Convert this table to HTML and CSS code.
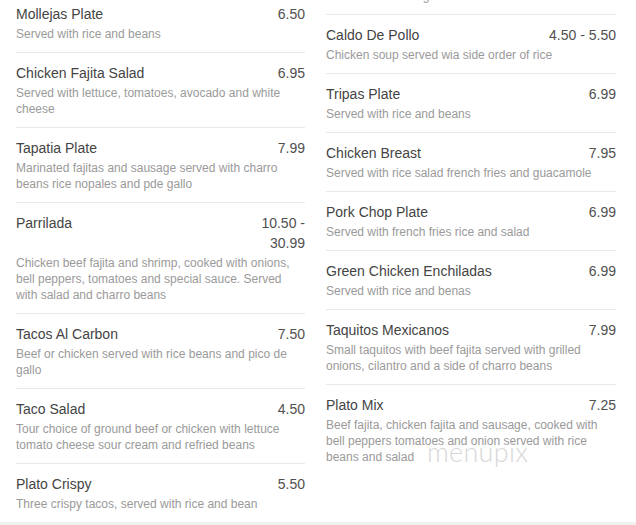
FILE: index.html
```html
<!DOCTYPE html>
<html>
<head>
<meta charset="utf-8">
<link rel="stylesheet" href="styles.css">
</head>
<body>
<div class="page">
  <div class="col col-left">
    <div class="item">
      <div class="head"><span class="name">Mollejas Plate</span><span class="price">6.50</span></div>
      <div class="desc">Served with rice and beans</div>
    </div>
    <div class="item">
      <div class="head"><span class="name">Chicken Fajita Salad</span><span class="price">6.95</span></div>
      <div class="desc">Served with lettuce, tomatoes, avocado and white cheese</div>
    </div>
    <div class="item">
      <div class="head"><span class="name">Tapatia Plate</span><span class="price">7.99</span></div>
      <div class="desc">Marinated fajitas and sausage served with charro beans rice nopales and pde gallo</div>
    </div>
    <div class="item">
      <div class="head"><span class="name">Parrilada</span><span class="price">10.50 - 30.99</span></div>
      <div class="desc">Chicken beef fajita and shrimp, cooked with onions, bell peppers, tomatoes and special sauce. Served with salad and charro beans</div>
    </div>
    <div class="item">
      <div class="head"><span class="name">Tacos Al Carbon</span><span class="price">7.50</span></div>
      <div class="desc">Beef or chicken served with rice beans and pico de gallo</div>
    </div>
    <div class="item">
      <div class="head"><span class="name">Taco Salad</span><span class="price">4.50</span></div>
      <div class="desc">Tour choice of ground beef or chicken with lettuce tomato cheese sour cream and refried beans</div>
    </div>
    <div class="item">
      <div class="head"><span class="name">Plato Crispy</span><span class="price">5.50</span></div>
      <div class="desc">Three crispy tacos, served with rice and bean</div>
    </div>
  </div>
  <div class="col col-right">
    <div class="item item-partial">
      <div class="desc">refried beans and guacamole</div>
    </div>
    <div class="item">
      <div class="head"><span class="name">Caldo De Pollo</span><span class="price">4.50 - 5.50</span></div>
      <div class="desc">Chicken soup served wia side order of rice</div>
    </div>
    <div class="item">
      <div class="head"><span class="name">Tripas Plate</span><span class="price">6.99</span></div>
      <div class="desc">Served with rice and beans</div>
    </div>
    <div class="item">
      <div class="head"><span class="name">Chicken Breast</span><span class="price">7.95</span></div>
      <div class="desc">Served with rice salad french fries and guacamole</div>
    </div>
    <div class="item">
      <div class="head"><span class="name">Pork Chop Plate</span><span class="price">6.99</span></div>
      <div class="desc">Served with french fries rice and salad</div>
    </div>
    <div class="item">
      <div class="head"><span class="name">Green Chicken Enchiladas</span><span class="price">6.99</span></div>
      <div class="desc">Served with rice and benas</div>
    </div>
    <div class="item">
      <div class="head"><span class="name">Taquitos Mexicanos</span><span class="price">7.99</span></div>
      <div class="desc">Small taquitos with beef fajita served with grilled onions, cilantro and a side of charro beans</div>
    </div>
    <div class="item">
      <div class="head"><span class="name">Plato Mix</span><span class="price">7.25</span></div>
      <div class="desc">Beef fajita, chicken fajita and sausage, cooked with bell peppers tomatoes and onion served with rice beans and salad</div>
    </div>
  </div>
  <div class="watermark">menupix</div>
</div>
</body>
</html>
```

FILE: styles.css
```css
html, body {
  margin: 0;
  padding: 0;
}
body {
  background: #f0f0f0;
  font-family: "Liberation Sans", Arial, Helvetica, sans-serif;
}
.page {
  position: relative;
  height: 522px;
  overflow: hidden;
  background: #fff;
  padding: 0 20px 0 16px;
  display: grid;
  grid-template-columns: 289px 290px;
  column-gap: 21px;
  align-items: start;
}
.col-left {
  margin-top: -7px;
}
.col-right {
  margin-top: -13px;
}
.item {
  border-top: 1px solid #e9e9e9;
  padding: 10px 0 10px;
}
.col .item:first-child {
  border-top-color: transparent;
}
.item-partial {
  padding-top: 0;
}
.head {
  display: flex;
  justify-content: space-between;
  align-items: flex-start;
  font-size: 14px;
  line-height: 20px;
  color: #444;
}
.price {
  max-width: 72px;
  margin-left: 12px;
  text-align: right;
  color: #505050;
}
.desc {
  margin-top: 2px;
  font-size: 12px;
  line-height: 16px;
  color: #9a9a9a;
}
.item-partial .desc {
  margin-top: 0;
}
.watermark {
  position: absolute;
  left: 427px;
  top: 438px;
  font-family: Lato, "Open Sans", sans-serif;
  font-weight: 300;
  font-size: 27px;
  letter-spacing: 0.3px;
  color: #d8d8d8;
  line-height: 1;
}
```
